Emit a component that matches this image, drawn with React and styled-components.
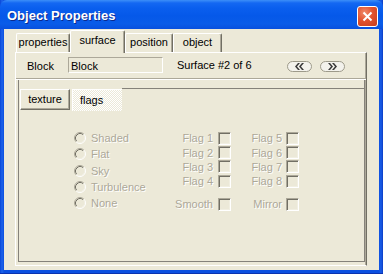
import React from "react";
import styled, { createGlobalStyle } from "styled-components";

const GlobalStyle = createGlobalStyle`
  html, body {
    margin: 0;
    padding: 0;
    background: #ece9d8;
  }
  body {
    font-family: "Liberation Sans", Arial, sans-serif;
    font-size: 11px;
    color: #000;
  }
`;

const RadioIcon = () => (
  <svg width="12" height="12" viewBox="0 0 12 12">
    <circle cx="6" cy="6" r="5" fill="#ece9d8" />
    <path d="M2.11 9.89 A5.5 5.5 0 0 1 9.89 2.11" fill="none" stroke="#aca899" />
    <path d="M9.89 2.11 A5.5 5.5 0 0 1 2.11 9.89" fill="none" stroke="#ffffff" />
    <path d="M2.82 9.18 A4.5 4.5 0 0 1 9.18 2.82" fill="none" stroke="#716f64" />
    <path d="M9.18 2.82 A4.5 4.5 0 0 1 2.82 9.18" fill="none" stroke="#f1efe2" />
  </svg>
);

const NavIcon = ({ dir }) => (
  <svg width="25" height="11" viewBox="0 0 25 11">
    <rect x="0.5" y="0.5" width="24" height="10" rx="5" fill="#f3f2ec" stroke="#9d9a8a" />
    <g fill="#3a3a3a" transform={dir === "next" ? "translate(25 0) scale(-1 1)" : undefined}>
      <polygon points="11,2 8,5.5 11,9 13,9 10,5.5 13,2" />
      <polygon points="15,2 12,5.5 15,9 17,9 14,5.5 17,2" />
    </g>
  </svg>
);

const App = () => {
  return (
    <>
      <GlobalStyle />
      <Window>
        <TitleBar>
          <Title>Object Properties</Title>
          <CloseButton>
            <svg width="11" height="11" viewBox="0 0 11 11">
              <path d="M1.5 1.5 L9.5 9.5 M9.5 1.5 L1.5 9.5" stroke="#fff" strokeWidth="2" />
            </svg>
          </CloseButton>
        </TitleBar>
        <Client>
          <TabStrip>
            {topTabs.map((tab) => (
              <Tab key={tab.label} $w={tab.width} $active={tab.active}>
                {tab.label}
              </Tab>
            ))}
          </TabStrip>
          <Pane>
            <InfoRow>
              <FieldLabel>Block</FieldLabel>
              <FieldBox>Block</FieldBox>
              <SurfaceText>Surface #2 of 6</SurfaceText>
              <NavButtons>
                <NavButton>
                  <NavIcon dir="prev" />
                </NavButton>
                <NavButton>
                  <NavIcon dir="next" />
                </NavButton>
              </NavButtons>
            </InfoRow>
            <Separator />
            <InnerFrame>
              <InnerTabRow>
                <InnerTab>texture</InnerTab>
                <InnerTab $active>flags</InnerTab>
                <InnerTabFill />
              </InnerTabRow>
              <FlagsBody>
                <RadioColumn>
                  {shadeModes.map((mode) => (
                    <RadioRow key={mode}>
                      <RadioIcon />
                      <DisabledText>{mode}</DisabledText>
                    </RadioRow>
                  ))}
                </RadioColumn>
                <FlagColumn $w={54}>
                  {["Flag 1", "Flag 2", "Flag 3", "Flag 4"].map((f) => (
                    <CheckRow key={f} $gap={5}>
                      <DisabledText>{f}</DisabledText>
                      <CheckBox />
                    </CheckRow>
                  ))}
                  <CheckRow $gap={5} $extra>
                    <DisabledText>Smooth</DisabledText>
                    <CheckBox />
                  </CheckRow>
                </FlagColumn>
                <FlagColumn $w={46} $offset={22}>
                  {["Flag 5", "Flag 6", "Flag 7", "Flag 8"].map((f) => (
                    <CheckRow key={f} $gap={4}>
                      <DisabledText>{f}</DisabledText>
                      <CheckBox />
                    </CheckRow>
                  ))}
                  <CheckRow $gap={4} $extra>
                    <DisabledText>Mirror</DisabledText>
                    <CheckBox />
                  </CheckRow>
                </FlagColumn>
              </FlagsBody>
            </InnerFrame>
          </Pane>
        </Client>
      </Window>
    </>
  );
};

const Window = styled.div`
  width: 383px;
  height: 274px;
  box-sizing: border-box;
  display: flex;
  flex-direction: column;
  background: linear-gradient(to right, #0846d8 0px, #1d63ea 2px, #0b4fe0 4px, #0b4fe0 379px, #1a5ce6 381px, #0a3cc4 383px);
  border-bottom: 1px solid #0a32b0;
`;

const TitleBar = styled.div`
  height: 29px;
  flex: none;
  display: flex;
  align-items: center;
  justify-content: space-between;
  padding: 0 5px 0 7px;
  border-radius: 7px 7px 0 0;
  background: linear-gradient(
    to bottom,
    #3c8ff8 0px,
    #1468f2 3px,
    #0a5fee 8px,
    #0558e9 16px,
    #0a5ce8 24px,
    #0850de 29px
  );
`;

const Title = styled.span`
  font-family: "Liberation Sans", Arial, sans-serif;
  font-weight: bold;
  font-size: 13px;
  color: #fff;
  text-shadow: 1px 1px 0 #0c2a8e;
  margin-top: 2px;
`;

const CloseButton = styled.div`
  width: 21px;
  height: 21px;
  box-sizing: border-box;
  margin-top: 3px;
  border: 1px solid #fff;
  border-radius: 3px;
  display: flex;
  align-items: center;
  justify-content: center;
  background: radial-gradient(circle at 35% 30%, #f08b6c 0%, #e2532f 45%, #c63c1c 100%);
`;

const Client = styled.div`
  flex: 1;
  margin: 0 4px 3px;
  background: #ece9d8;
  padding: 1px 12px 4px 11px;
  display: flex;
  flex-direction: column;
`;

const TabStrip = styled.div`
  height: 22px;
  flex: none;
  display: flex;
  align-items: flex-end;
  padding-left: 1px;
`;

const Tab = styled.div`
  position: relative;
  width: ${(p) => p.$w}px;
  height: ${(p) => (p.$active ? 23 : 19)}px;
  margin-bottom: ${(p) => (p.$active ? -1 : 0)}px;
  z-index: ${(p) => (p.$active ? 1 : 0)};
  box-sizing: border-box;
  border-top: 1px solid #fff;
  border-left: 1px solid #fff;
  border-right: 1px solid #716f64;
  border-radius: 2px 2px 0 0;
  box-shadow: inset -1px 0 0 #aca899;
  background: #ece9d8;
  display: flex;
  align-items: center;
  justify-content: center;
  padding-bottom: ${(p) => (p.$active ? 5 : 2)}px;
`;

const Pane = styled.div`
  flex: 1;
  box-sizing: border-box;
  border-top: 1px solid #fff;
  border-left: 1px solid #fff;
  border-right: 1px solid #716f64;
  border-bottom: 1px solid #fff;
  box-shadow: inset -1px 0 0 #aca899;
  display: flex;
  flex-direction: column;
`;

const InfoRow = styled.div`
  height: 24px;
  flex: none;
  display: flex;
  align-items: center;
  padding-left: 11px;
`;

const FieldLabel = styled.span`
  width: 41px;
  margin-top: 1px;
`;

const FieldBox = styled.div`
  width: 95px;
  height: 16px;
  box-sizing: border-box;
  border: 1px solid;
  border-color: #aca899 #fff #fff #aca899;
  padding-left: 2px;
  display: flex;
  align-items: center;
  padding-top: 1px;
`;

const SurfaceText = styled.span`
  margin-left: 14px;
`;

const NavButtons = styled.div`
  display: flex;
  gap: 8px;
  margin-left: 35px;
  margin-top: 3px;
`;

const NavButton = styled.div`
  display: flex;
`;

const Separator = styled.div`
  height: 0;
  margin-top: 1px;
  border-top: 1px solid #aca899;
  border-bottom: 1px solid #fff;
`;

const InnerFrame = styled.div`
  flex: 1;
  margin: 0 1px 3px 2px;
  box-sizing: border-box;
  border-left: 1px solid #85827a;
  border-right: 1px solid #85827a;
  border-bottom: 1px solid #85827a;
  display: flex;
  flex-direction: column;
  padding-top: 8px;
`;

const InnerTabRow = styled.div`
  height: 22px;
  flex: none;
  display: flex;
  align-items: flex-start;
`;

const InnerTab = styled.div`
  width: 50px;
  height: ${(p) => (p.$active ? 22 : 21)}px;
  box-sizing: border-box;
  margin: 1px 0 0 ${(p) => (p.$active ? 2 : 1)}px;
  border-top: 1px solid #fff;
  border-left: 1px solid #fff;
  border-right: ${(p) => (p.$active ? "none" : "1px solid #716f64")};
  border-bottom: ${(p) => (p.$active ? "none" : "1px solid #716f64")};
  box-shadow: ${(p) => (p.$active ? "none" : "inset -1px -1px 0 #aca899")};
  background: ${(p) =>
    p.$active
      ? "repeating-conic-gradient(#ffffff 0% 25%, #ece9d8 0% 50%) 0 0 / 2px 2px"
      : "#ece9d8"};
  display: flex;
  align-items: center;
  justify-content: ${(p) => (p.$active ? "flex-start" : "center")};
  padding-left: ${(p) => (p.$active ? 7 : 0)}px;
  padding-bottom: 1px;
`;

const InnerTabFill = styled.div`
  flex: 1;
  align-self: stretch;
  border-top: 1px solid #85827a;
`;

const FlagsBody = styled.div`
  flex: 1;
  display: flex;
  align-items: flex-start;
  padding: 20px 0 0 55px;
`;

const RadioColumn = styled.div`
  width: 103px;
  display: flex;
  flex-direction: column;
`;

const RadioRow = styled.div`
  height: 16.3px;
  display: flex;
  align-items: center;
  gap: 5px;
`;

const DisabledText = styled.span`
  color: #aca899;
  text-shadow: 1px 1px 0 #fff;
  white-space: nowrap;
`;

const FlagColumn = styled.div`
  width: ${(p) => p.$w}px;
  margin-left: ${(p) => p.$offset || 0}px;
  padding-top: 1px;
  display: flex;
  flex-direction: column;
`;

const CheckRow = styled.div`
  height: 14.4px;
  margin-top: ${(p) => (p.$extra ? 8.6 : 0)}px;
  display: flex;
  align-items: center;
  justify-content: flex-end;
  gap: ${(p) => p.$gap}px;
`;

const CheckBox = styled.div`
  width: 13px;
  height: 13px;
  flex: none;
  box-sizing: border-box;
  border: 1px solid;
  border-color: #aca899 #fff #fff #aca899;
  box-shadow: inset 1px 1px 0 #716f64, inset -1px -1px 0 #f1efe2;
  background: #ece9d8;
`;

const topTabs = [
  { label: "properties", width: 54 },
  { label: "surface", width: 55, active: true },
  { label: "position", width: 48 },
  { label: "object", width: 49 },
];

const shadeModes = ["Shaded", "Flat", "Sky", "Turbulence", "None"];

export default App;
